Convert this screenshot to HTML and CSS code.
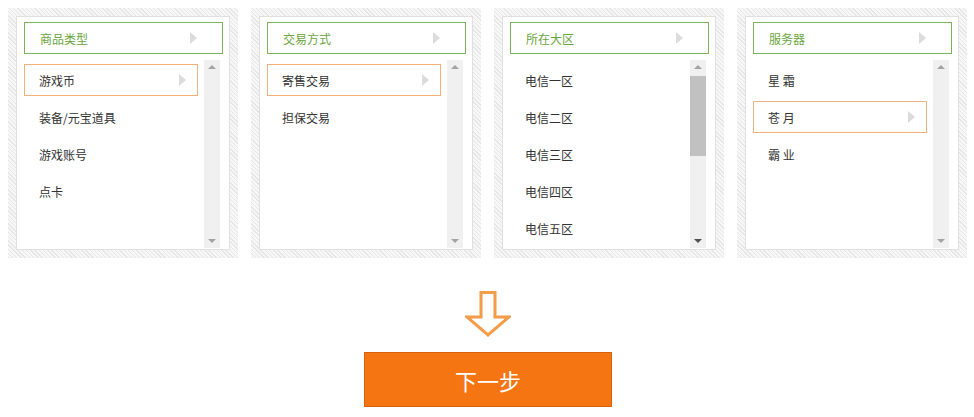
FILE: index.html
```html
<!DOCTYPE html>
<html lang="zh-CN">
<head>
<meta charset="utf-8">
<title>选择</title>
<link rel="stylesheet" href="styles.css">
</head>
<body>
<div class="panels">
  <div class="panel">
    <div class="inner">
      <div class="head">商品类型<span class="tri"></span></div>
      <div class="body">
        <ul class="list">
          <li class="item sel">游戏币<span class="tri"></span></li>
          <li class="item">装备/元宝道具</li>
          <li class="item">游戏账号</li>
          <li class="item">点卡</li>
        </ul>
        <div class="sb"><span class="up"></span><span class="dn"></span></div>
      </div>
    </div>
  </div>
  <div class="panel">
    <div class="inner">
      <div class="head">交易方式<span class="tri"></span></div>
      <div class="body">
        <ul class="list">
          <li class="item sel">寄售交易<span class="tri"></span></li>
          <li class="item">担保交易</li>
        </ul>
        <div class="sb"><span class="up"></span><span class="dn"></span></div>
      </div>
    </div>
  </div>
  <div class="panel">
    <div class="inner">
      <div class="head">所在大区<span class="tri"></span></div>
      <div class="body">
        <ul class="list">
          <li class="item">电信一区</li>
          <li class="item">电信二区</li>
          <li class="item">电信三区</li>
          <li class="item">电信四区</li>
          <li class="item">电信五区</li>
        </ul>
        <div class="sb active"><span class="up"></span><span class="thumb"></span><span class="dn"></span></div>
      </div>
    </div>
  </div>
  <div class="panel">
    <div class="inner">
      <div class="head">服务器<span class="tri"></span></div>
      <div class="body">
        <ul class="list">
          <li class="item">星 霜</li>
          <li class="item sel">苍 月<span class="tri"></span></li>
          <li class="item">霸 业</li>
        </ul>
        <div class="sb"><span class="up"></span><span class="dn"></span></div>
      </div>
    </div>
  </div>
</div>
<div class="next">
  <svg class="arrow" width="46" height="46" viewBox="0 0 46 46">
    <polygon points="16,1.5 30,1.5 30,26 44,26 23,44 2,26 16,26" fill="none" stroke="#f39c4a" stroke-width="3" stroke-linejoin="miter"/>
  </svg>
  <button class="btn">下一步</button>
</div>
</body>
</html>
```
FILE: styles.css
```css
* { box-sizing: border-box; }
html, body { margin: 0; padding: 0; background: #fff; }
body {
  font-family: "Noto Sans CJK SC", "Liberation Sans", sans-serif;
  font-size: 12px;
  color: #333;
}
.panels {
  display: flex;
  gap: 13px;
  padding: 8px 0 0 8px;
}
.panel {
  width: 230px;
  height: 250px;
  padding: 8px;
  background-color: #f2f2f2;
  background-image: repeating-linear-gradient(45deg, #e6e6e6 0 1px, #f7f7f7 1px 3px);
}
.inner {
  height: 234px;
  background: #fff;
  border: 1px solid #e0e0e0;
  padding: 5px 6px 0 7px;
}
.head {
  position: relative;
  height: 32px;
  border: 1px solid #7db35a;
  color: #6aa53e;
  line-height: 31px;
  padding-left: 15px;
  margin-bottom: 6px;
}
.tri {
  position: absolute;
  top: 50%;
  margin-top: -6px;
  width: 0;
  height: 0;
  border-left: 7px solid #dcdcdc;
  border-top: 6px solid transparent;
  border-bottom: 6px solid transparent;
}
.head .tri { right: 25px; }
.item .tri { right: 11px; }
.body {
  display: flex;
  gap: 6px;
  height: 188px;
}
.list {
  list-style: none;
  margin: 0;
  padding: 4px 0 0;
  width: 174px;
  display: flex;
  flex-direction: column;
  gap: 5px;
}
.item {
  position: relative;
  height: 32px;
  line-height: 32px;
  padding-left: 14px;
  border: 1px solid transparent;
}
.item.sel { border-color: #f4b07a; }
.sb {
  position: relative;
  width: 16px;
  height: 188px;
  background: #f0f0f0;
}
.up, .dn {
  position: absolute;
  left: 4px;
  width: 0;
  height: 0;
  border-left: 4px solid transparent;
  border-right: 4px solid transparent;
}
.up { top: 5px; border-bottom: 4px solid #a3a3a3; }
.dn { bottom: 5px; border-top: 4px solid #a3a3a3; }
.active .dn { border-top-color: #505050; }
.thumb {
  position: absolute;
  left: 0;
  top: 16px;
  width: 16px;
  height: 80px;
  background: #c1c1c1;
}
.next {
  display: flex;
  flex-direction: column;
  align-items: center;
  padding-top: 33px;
  padding-left: 2px;
}
.arrow { display: block; }
.btn {
  margin-top: 15px;
  width: 248px;
  height: 55px;
  background: #f57512;
  border: 1px solid #d6630b;
  color: #fff;
  font-family: "Noto Sans CJK SC", "Liberation Sans", sans-serif;
  font-size: 22px;
  padding: 0;
  cursor: pointer;
}
```
